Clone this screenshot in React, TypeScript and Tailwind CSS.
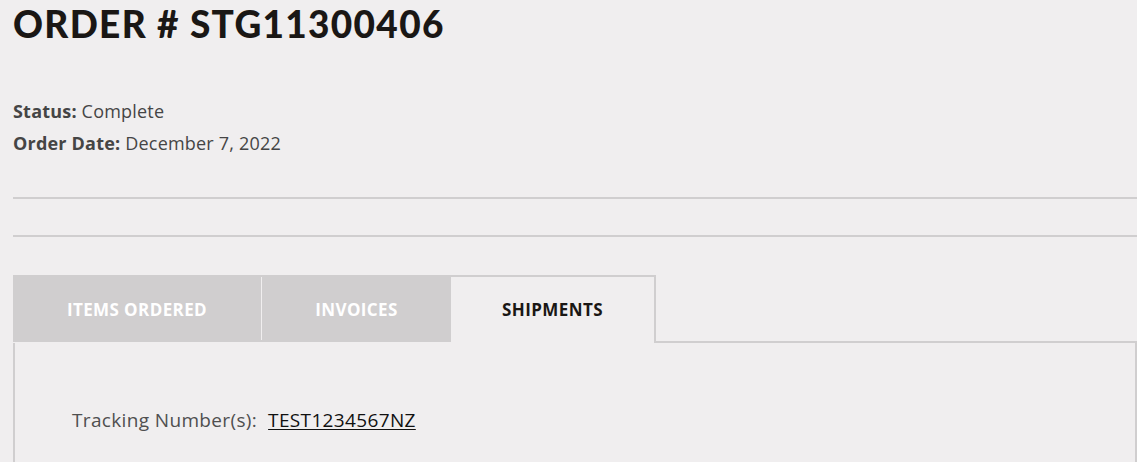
import React from "react";

export default function App() {
  return (
    <div className="min-h-[462px] w-full overflow-hidden bg-[#f0eeef] pl-[13px] font-['Open_Sans',sans-serif]">
      <h1 className="pt-[2px] font-['Lato',sans-serif] text-[37px] font-black leading-[44px] tracking-[1.3px] text-[#1a1715]">
        ORDER # STG11300406
      </h1>
      <div className="mt-[49px] text-[18px] leading-[32px] tracking-[0.2px] text-[#454545]">
        <div>
          <span className="font-bold">Status:</span> Complete
        </div>
        <div>
          <span className="font-bold">Order Date:</span> December 7, 2022
        </div>
      </div>
      <div className="mt-[38px] h-[2px] bg-[#d0cecf]" />
      <div className="mt-[36px] h-[2px] bg-[#d0cecf]" />
      <div className="mt-[38px]">
        <div className="flex h-[68px] text-[17px] font-bold uppercase tracking-[0.4px]">
          <div className="flex bg-[#d0cecf] h-[67px]">
            <div className="flex w-[248px] items-center justify-center pt-[2px] text-white">
              Items Ordered
            </div>
            <div className="my-[2px] w-px bg-[#f0eeef]" />
            <div className="flex w-[189px] items-center justify-center pt-[2px] text-white">
              Invoices
            </div>
          </div>
          <div className="flex w-[205px] items-center justify-center border-t-2 border-r-2 border-[#d0cecf] text-[#1a1715]">
            Shipments
          </div>
          <div className="flex-1 border-b-2 border-[#d0cecf]" />
        </div>
        <div className="h-[140px] border-x-2 border-[#d0cecf] pl-[57px] pt-[65px] text-[19px] leading-[24px] tracking-[0.35px] text-[#4f4f4f]">
          <span>Tracking Number(s):</span>
          <a href="#" className="ml-[11px] text-[#111] underline underline-offset-2">
            TEST1234567NZ
          </a>
        </div>
      </div>
    </div>
  );
}
